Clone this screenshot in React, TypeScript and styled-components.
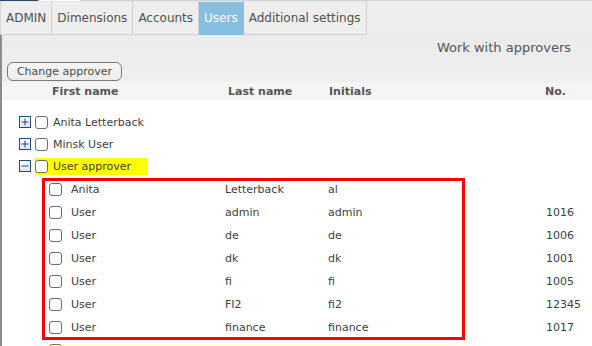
import React from "react";
import styled, { createGlobalStyle } from "styled-components";

const Global = createGlobalStyle`
  html, body { margin: 0; padding: 0; background: #ffffff; }
  body { font-family: "DejaVu Sans", Verdana, sans-serif; }
  * { box-sizing: border-box; }
`;

const Page = styled.div`
  width: 592px;
  height: 346px;
  overflow: hidden;
  background: #ffffff;
  display: flex;
  flex-direction: column;
`;

const TopStrip = styled.div`
  height: 1px;
  flex: none;
  display: flex;
  background: #d4d4d4;
`;

const TopAccent = styled.div`
  width: 38px;
  background: #2c4a66;
  margin-right: 2px;
`;

const TopGap = styled.div`
  width: 40px;
  background: #ffffff;
`;

const TabBar = styled.div`
  height: 34px;
  flex: none;
  display: flex;
  background: #eeeeee;
`;

const Tab = styled.div<{ $active?: boolean }>`
  height: 34px;
  padding: 0 5px 0 5px;
  display: flex;
  align-items: center;
  font-size: 12px;
  color: ${(p) => (p.$active ? "#ffffff" : "#505050")};
  background: ${(p) => (p.$active ? "#88bde2" : "#eeeeee")};
  border-right: 1px solid ${(p) => (p.$active ? "#88bde2" : "#d0d0d0")};
  border-bottom: 1px solid ${(p) => (p.$active ? "#88bde2" : "#d0d0d0")};
  border-top: 1px solid #e4e4e4;
  &:first-child {
    border-left: 1px solid #d6d6d6;
  }
`;

const Content = styled.div`
  flex: 1;
  border-left: 2px solid #8c8c8c;
  display: flex;
  flex-direction: column;
  background: #ffffff;
`;

const Toolbar = styled.div`
  background: linear-gradient(#ebebeb, #efefef);
  padding: 5px 21px 1px 5px;
  display: flex;
  flex-direction: column;
`;

const Title = styled.div`
  align-self: flex-end;
  font-size: 13px;
  line-height: 16px;
  color: #555555;
`;

const ActionButton = styled.button`
  align-self: flex-start;
  margin-top: 6px;
  height: 19px;
  width: 115px;
  padding: 0;
  border: 1px solid #7a7a7a;
  border-radius: 6px;
  background: linear-gradient(#f6f6f6, #ececec);
  font-family: "DejaVu Sans", Verdana, sans-serif;
  font-size: 11px;
  color: #4a4a4a;
`;

const HeaderRow = styled.div`
  height: 18px;
  background: #f5f5f5;
  display: grid;
  grid-template-columns: 176px 101px 216px 1fr;
  padding-left: 50px;
  align-items: center;
  font-size: 11px;
  font-weight: bold;
  color: #555555;
`;

const Body = styled.div`
  padding-top: 11px;
  display: flex;
  flex-direction: column;
  font-size: 11px;
  color: #3e3e3e;
`;

const TreeRow = styled.div`
  height: 22px;
  display: flex;
  align-items: center;
  padding-left: 17px;
  gap: 4px;
`;

const Expander = styled.span`
  width: 12px;
  height: 12px;
  display: block;
  flex: none;
  margin-top: -1px;
`;

const Check = styled.span`
  width: 13px;
  height: 13px;
  flex: none;
  border: 1px solid #6e6e6e;
  border-radius: 3px;
  background: #ffffff;
  display: block;
`;

const Node = styled.span<{ $marked?: boolean }>`
  display: flex;
  align-items: center;
  gap: 5px;
  height: 17px;
  padding-right: ${(p) => (p.$marked ? "17px" : "0")};
  background: ${(p) => (p.$marked ? "#ffff00" : "transparent")};
`;

const ChildGroup = styled.div`
  position: relative;
  margin-top: 1px;
  display: flex;
  flex-direction: column;
`;

const ChildRow = styled.div`
  height: 23px;
  display: grid;
  grid-template-columns: 22px 154px 103px 218px 1fr;
  padding-left: 47px;
  align-items: center;
`;

const RedFrame = styled.div`
  position: absolute;
  left: 40px;
  top: 0;
  width: 423px;
  height: 162px;
  border: 3px solid #ff0000;
  pointer-events: none;
`;

const ExpanderIcon = ({ open }: { open?: boolean }) => (
  <Expander>
    <svg width="12" height="12" viewBox="0 0 12 12">
      <defs>
        <linearGradient id={open ? "gm" : "gp"} x1="0" y1="0" x2="0" y2="1">
          <stop offset="0" stopColor="#ffffff" />
          <stop offset="1" stopColor="#dfe5ec" />
        </linearGradient>
      </defs>
      <rect x="0.5" y="0.5" width="11" height="11" fill={`url(#${open ? "gm" : "gp"})`} stroke="#1f4c78" />
      <line x1="2.5" y1="6" x2="9.5" y2="6" stroke="#1f4c78" strokeWidth="1" />
      {!open && <line x1="6" y1="2.5" x2="6" y2="9.5" stroke="#1f4c78" strokeWidth="1" />}
    </svg>
  </Expander>
);

const tabs = ["ADMIN", "Dimensions", "Accounts", "Users", "Additional settings"];

const children = [
  ["Anita", "Letterback", "al", ""],
  ["User", "admin", "admin", "1016"],
  ["User", "de", "de", "1006"],
  ["User", "dk", "dk", "1001"],
  ["User", "fi", "fi", "1005"],
  ["User", "FI2", "fi2", "12345"],
  ["User", "finance", "finance", "1017"],
  ["User finland", "finland", "fin", "1018"],
];

export default function App() {
  return (
    <Page>
      <Global />
      <TopStrip>
        <TopAccent />
        <TopGap />
      </TopStrip>
      <TabBar>
        {tabs.map((t) => (
          <Tab key={t} $active={t === "Users"}>
            {t}
          </Tab>
        ))}
      </TabBar>
      <Content>
        <Toolbar>
          <Title>Work with approvers</Title>
          <ActionButton>Change approver</ActionButton>
        </Toolbar>
        <HeaderRow>
          <span>First name</span>
          <span>Last name</span>
          <span>Initials</span>
          <span>No.</span>
        </HeaderRow>
        <Body>
          <TreeRow>
            <ExpanderIcon />
            <Node>
              <Check />
              <span>Anita Letterback</span>
            </Node>
          </TreeRow>
          <TreeRow>
            <ExpanderIcon />
            <Node>
              <Check />
              <span>Minsk User</span>
            </Node>
          </TreeRow>
          <TreeRow>
            <ExpanderIcon open />
            <Node $marked>
              <Check />
              <span>User approver</span>
            </Node>
          </TreeRow>
          <ChildGroup>
            {children.map((c, i) => (
              <ChildRow key={i}>
                <Check />
                <span>{c[0]}</span>
                <span>{c[1]}</span>
                <span>{c[2]}</span>
                <span>{c[3]}</span>
              </ChildRow>
            ))}
            <RedFrame />
          </ChildGroup>
        </Body>
      </Content>
    </Page>
  );
}
